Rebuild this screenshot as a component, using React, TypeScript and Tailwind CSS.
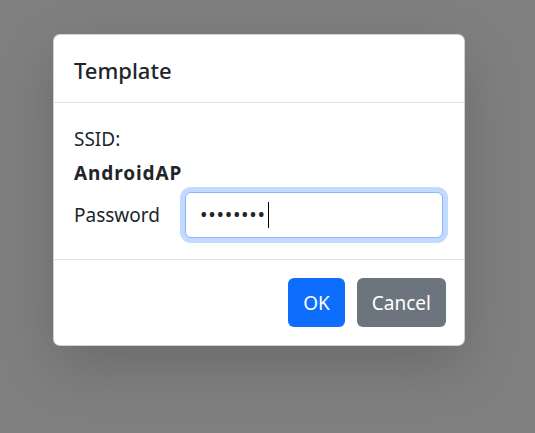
export default function App() {
  return (
    <div
      className="w-[535px] h-[433px] bg-[#808080] pt-[34px] pl-[53px] overflow-hidden"
      style={{ fontFamily: '"Noto Sans", "Open Sans", sans-serif' }}
    >
      <div className="w-[412px] h-[312px] bg-white rounded-[7px] border border-[rgba(0,0,0,0.175)] shadow-[0_20px_60px_rgba(0,0,0,0.175)] flex flex-col text-[#212529]">
        <div className="h-[68px] border-b border-[#dee2e6] flex items-center px-[20px]">
          <h5 className="text-[22px] font-medium leading-none mt-[2px]">Template</h5>
        </div>
        <div className="h-[157px] border-b border-[#dee2e6] px-[20px] pt-[20px] flex flex-col">
          <div className="text-[19px] leading-[32px] h-[32px]">SSID:</div>
          <div className="text-[19px] font-bold tracking-[0.9px] leading-[32px] h-[32px] mt-[2px]">AndroidAP</div>
          <div className="flex items-center mt-[3px]">
            <div className="text-[19px] w-[111px] mt-[1px]">Password</div>
            <div className="w-[258px] h-[46px] rounded-[6px] border border-[#86b7fe] shadow-[0_0_0_5px_#c3dafe] bg-white flex items-center pl-[14px]">
              <span className="text-[20px] tracking-[0.7px] text-[#212529] leading-none">••••••••</span>
              <span className="w-[1px] h-[26px] bg-black ml-[2px]"></span>
            </div>
          </div>
        </div>
        <div className="flex-1 flex items-center justify-end gap-[12px] pr-[18px]">
          <button className="h-[49px] px-[15px] rounded-[6px] bg-[#0d6efd] text-white text-[19px] pt-[1px]">OK</button>
          <button className="h-[49px] px-[15px] rounded-[6px] bg-[#6c757d] text-white text-[19px] pt-[1px]">Cancel</button>
        </div>
      </div>
    </div>
  );
}
